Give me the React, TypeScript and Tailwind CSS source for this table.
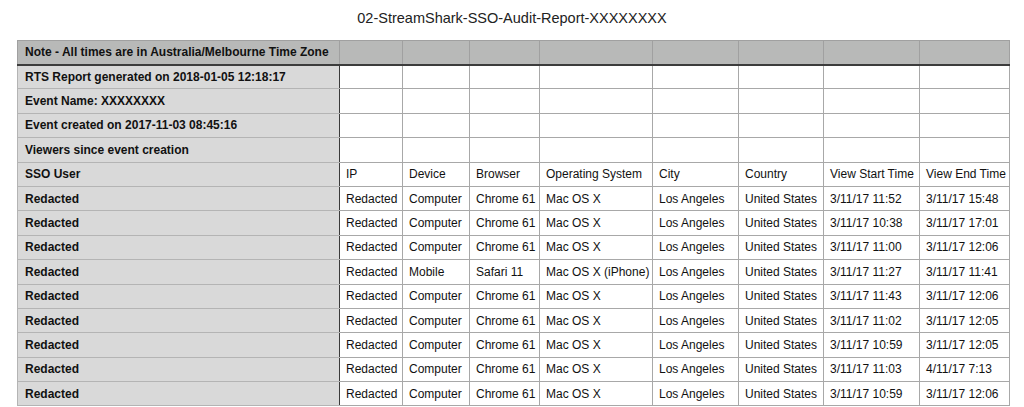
import React from "react";

type Row = [string, string, string, string, string, string, string, string];

const cols = [322, 63, 67, 70, 113, 86, 85, 96, 90];

const meta = [
  "RTS Report generated on 2018-01-05 12:18:17",
  "Event Name: XXXXXXXX",
  "Event created on 2017-11-03 08:45:16",
  "Viewers since event creation",
];

const head: Row = [
  "IP",
  "Device",
  "Browser",
  "Operating System",
  "City",
  "Country",
  "View Start Time",
  "View End Time",
];

const rows: Row[] = [
  ["Redacted", "Computer", "Chrome 61", "Mac OS X", "Los Angeles", "United States", "3/11/17 11:52", "3/11/17 15:48"],
  ["Redacted", "Computer", "Chrome 61", "Mac OS X", "Los Angeles", "United States", "3/11/17 10:38", "3/11/17 17:01"],
  ["Redacted", "Computer", "Chrome 61", "Mac OS X", "Los Angeles", "United States", "3/11/17 11:00", "3/11/17 12:06"],
  ["Redacted", "Mobile", "Safari 11", "Mac OS X (iPhone)", "Los Angeles", "United States", "3/11/17 11:27", "3/11/17 11:41"],
  ["Redacted", "Computer", "Chrome 61", "Mac OS X", "Los Angeles", "United States", "3/11/17 11:43", "3/11/17 12:06"],
  ["Redacted", "Computer", "Chrome 61", "Mac OS X", "Los Angeles", "United States", "3/11/17 11:02", "3/11/17 12:05"],
  ["Redacted", "Computer", "Chrome 61", "Mac OS X", "Los Angeles", "United States", "3/11/17 10:59", "3/11/17 12:05"],
  ["Redacted", "Computer", "Chrome 61", "Mac OS X", "Los Angeles", "United States", "3/11/17 11:03", "4/11/17 7:13"],
  ["Redacted", "Computer", "Chrome 61", "Mac OS X", "Los Angeles", "United States", "3/11/17 10:59", "3/11/17 12:06"],
];

const first =
  "bg-[#d9d9d9] border border-[#b4b4b4] border-r-[#3a3a3a] pl-[7px] font-bold text-left whitespace-nowrap";
const cell =
  "bg-white border border-[#a8a8a8] pl-[6px] text-left whitespace-nowrap";

export default function App() {
  return (
    <div
      className="w-[1024px] h-[407px] overflow-hidden bg-white text-[#111] text-[12px]"
      style={{ fontFamily: '"Liberation Sans", Arial, sans-serif' }}
    >
      <div className="h-[40px] flex items-center justify-center pb-[2px] text-[14.5px] text-[#222]">
        02-StreamShark-SSO-Audit-Report-XXXXXXXX
      </div>
      <table className="ml-[17px] table-fixed border-collapse border border-[#cacaca]">
        <colgroup>
          {cols.map((w, i) => (
            <col key={i} style={{ width: w }} />
          ))}
        </colgroup>
        <tbody>
          <tr className="h-[24px] bg-[#b8b9b8] border-b-2 border-b-[#3c3c3c]">
            <td className="border border-[#a0a0a0] border-b-2 border-b-[#3c3c3c] pl-[7px] font-bold whitespace-nowrap">
              Note - All times are in Australia/Melbourne Time Zone
            </td>
            {cols.slice(1).map((_, i) => (
              <td key={i} className="border border-[#a0a0a0] border-b-2 border-b-[#3c3c3c]" />
            ))}
          </tr>
          {meta.map((m) => (
            <tr key={m} className="h-[24.4px]">
              <td className={first}>{m}</td>
              {cols.slice(1).map((_, i) => (
                <td key={i} className={cell} />
              ))}
            </tr>
          ))}
          <tr className="h-[24.4px]">
            <td className={first}>SSO User</td>
            {head.map((h) => (
              <td key={h} className={cell}>
                {h}
              </td>
            ))}
          </tr>
          {rows.map((r, ri) => (
            <tr key={ri} className="h-[24.4px]">
              <td className={first}>Redacted</td>
              {r.map((v, ci) => (
                <td key={ci} className={cell}>
                  {v}
                </td>
              ))}
            </tr>
          ))}
        </tbody>
      </table>
    </div>
  );
}
